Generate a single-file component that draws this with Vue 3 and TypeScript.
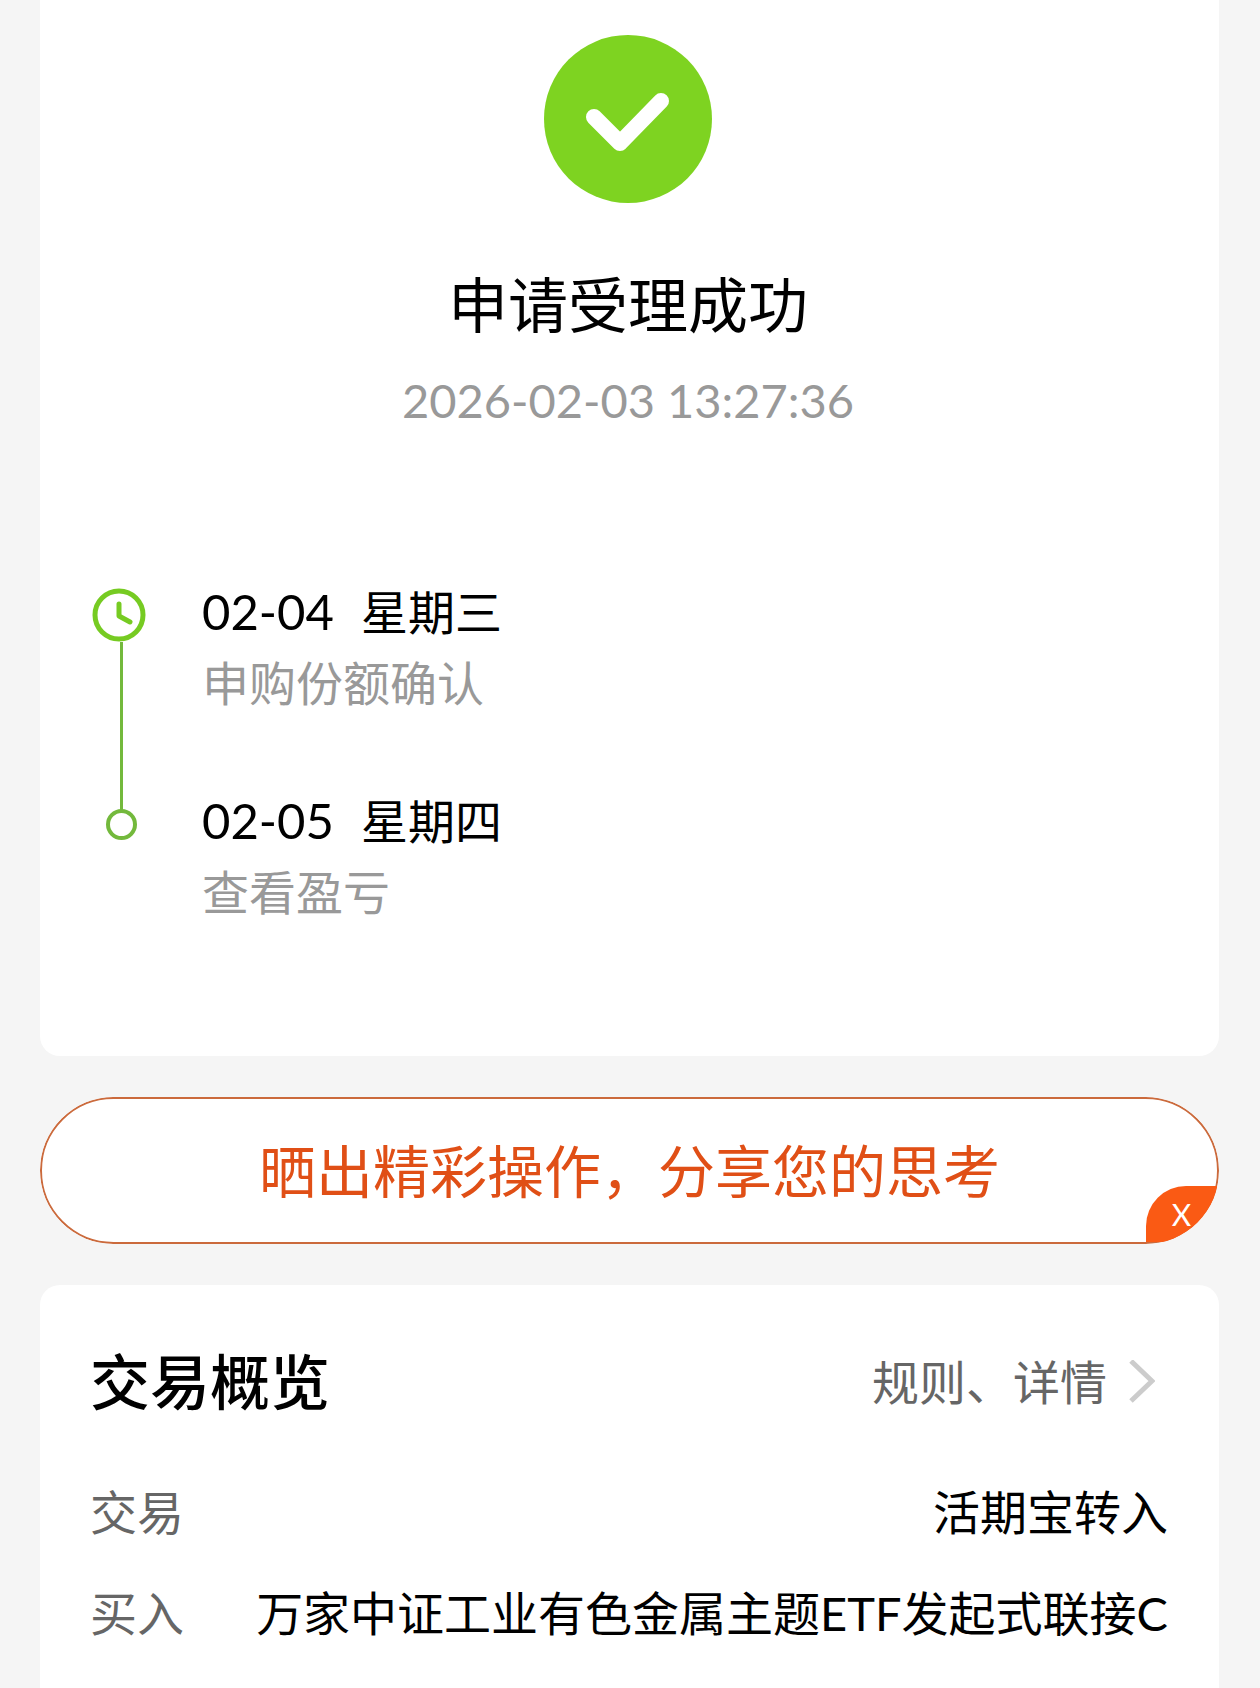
<script setup lang="ts">
import { ref } from 'vue'

interface Step {
  date: string
  weekday: string
  label: string
}

interface Detail {
  name: string
  value: string
}

const steps: Step[] = [
  { date: '02-04', weekday: '星期三', label: '申购份额确认' },
  { date: '02-05', weekday: '星期四', label: '查看盈亏' },
]

const details: Detail[] = [
  { name: '交易', value: '活期宝转入' },
  { name: '买入', value: '万家中证工业有色金属主题ETF发起式联接C' },
]

const shareVisible = ref(true)
</script>

<template>
  <main class="page">
    <section class="card result">
      <svg class="success" viewBox="0 0 168 168" aria-hidden="true">
        <circle cx="84" cy="84" r="84" fill="#7ed321" />
        <path d="M50 82 L76 108 L117 66" fill="none" stroke="#fff" stroke-width="16" stroke-linecap="round" stroke-linejoin="round" />
      </svg>
      <h1 class="title">申请受理成功</h1>
      <time class="time">2026-02-03 13:27:36</time>

      <ol class="steps">
        <li v-for="(step, i) in steps" :key="step.date" class="step">
          <div class="rail">
            <svg v-if="i === 0" class="clock" viewBox="0 0 54 54" aria-hidden="true">
              <circle cx="27" cy="27" r="24" fill="none" stroke="#76cb22" stroke-width="5" />
              <path d="M27 16 V28 L38 34" fill="none" stroke="#76cb22" stroke-width="5" stroke-linecap="round" stroke-linejoin="round" />
            </svg>
            <span v-else class="dot"></span>
            <span v-if="i < steps.length - 1" class="line"></span>
          </div>
          <div class="step-text">
            <p class="step-date"><span class="day">{{ step.date }}</span><span>{{ step.weekday }}</span></p>
            <p class="step-label">{{ step.label }}</p>
          </div>
        </li>
      </ol>
    </section>

    <div v-if="shareVisible" class="share">
      <button type="button" class="share-main">晒出精彩操作，分享您的思考</button>
      <button type="button" class="share-close" @click="shareVisible = false">X</button>
    </div>

    <section class="card overview">
      <header class="overview-head">
        <h2 class="heading">交易概览</h2>
        <a class="more" href="#">
          规则、详情
          <svg class="chevron" viewBox="0 0 26 44" aria-hidden="true">
            <path d="M2 1 L23 21 L2 41" fill="none" stroke="#ccc" stroke-width="5" />
          </svg>
        </a>
      </header>
      <dl class="details">
        <div v-for="item in details" :key="item.name" class="detail">
          <dt>{{ item.name }}</dt>
          <dd>{{ item.value }}</dd>
        </div>
      </dl>
    </section>
  </main>
</template>

<style>
body {
  background: #f5f5f5;
}
</style>

<style scoped>
.page {
  box-sizing: border-box;
  display: flex;
  flex-direction: column;
  gap: 41px;
  min-height: 100vh;
  padding: 0 41px 0 40px;
  font-family: Lato, "Noto Sans CJK SC", sans-serif;
  font-size: 47px;
  line-height: 71px;
  color: #000;
}

h1,
h2,
p,
ol,
dl,
dd {
  margin: 0;
  padding: 0;
}

.card {
  background: #fff;
}

.result {
  display: flex;
  flex-direction: column;
  align-items: center;
  padding: 35px 55px 128px 52px;
  border-radius: 0 0 20px 20px;
}

.success {
  width: 168px;
  height: 168px;
}

.title {
  margin-top: 57px;
  font-size: 60px;
  font-weight: 400;
  line-height: 90px;
}

.time {
  margin-top: 15px;
  color: #999;
}

.steps {
  align-self: stretch;
  margin-top: 140px;
  list-style: none;
}

.step {
  display: flex;
  gap: 51px;
}

.step:not(:last-child) {
  height: 209px;
}

.rail {
  display: flex;
  flex-direction: column;
  align-items: center;
  width: 59px;
  padding-top: 12px;
}

.clock {
  flex: none;
  align-self: flex-start;
  width: 54px;
  height: 54px;
}

.line {
  flex: 1;
  width: 3px;
  margin-bottom: -25px;
  background: #73b93c;
}

.dot {
  box-sizing: border-box;
  width: 31px;
  height: 31px;
  margin-top: 12px;
  border: 4px solid #73b93c;
  border-radius: 50%;
}

.step-date {
  display: flex;
  align-items: baseline;
  gap: 27px;
}

.day {
  font-size: 49px;
}

.step-label {
  color: #999;
}

.share {
  position: relative;
  overflow: hidden;
  border-radius: 74px;
  background: #fff;
}

button {
  border: 0;
  padding: 0;
  font-family: inherit;
  cursor: pointer;
}

.share-main {
  display: block;
  width: 100%;
  height: 147px;
  border: 2px solid #cb6a3c;
  border-radius: 74px;
  background: none;
  color: #e04f16;
  font-size: 57px;
  line-height: 86px;
}

.share-close {
  position: absolute;
  right: 2px;
  bottom: 2px;
  width: 71px;
  height: 56px;
  border-radius: 40px 0 0 0;
  background: #fa5a14;
  color: #fff;
  font-size: 30px;
  line-height: 56px;
}

.overview {
  flex: 1;
  padding: 52px 51px 0 50px;
  border-radius: 20px 20px 0 0;
}

.overview-head {
  display: flex;
  align-items: center;
  justify-content: space-between;
}

.heading {
  font-size: 60px;
  font-weight: 500;
  line-height: 90px;
}

.more {
  display: flex;
  align-items: center;
  gap: 22px;
  padding-right: 13px;
  color: #666;
  text-decoration: none;
}

.chevron {
  width: 26px;
  height: 44px;
}

.details {
  display: flex;
  flex-direction: column;
  gap: 30px;
  margin-top: 50px;
}

.detail {
  display: flex;
  justify-content: space-between;
}

dt {
  color: #666;
}

dd {
  text-align: right;
}
</style>
